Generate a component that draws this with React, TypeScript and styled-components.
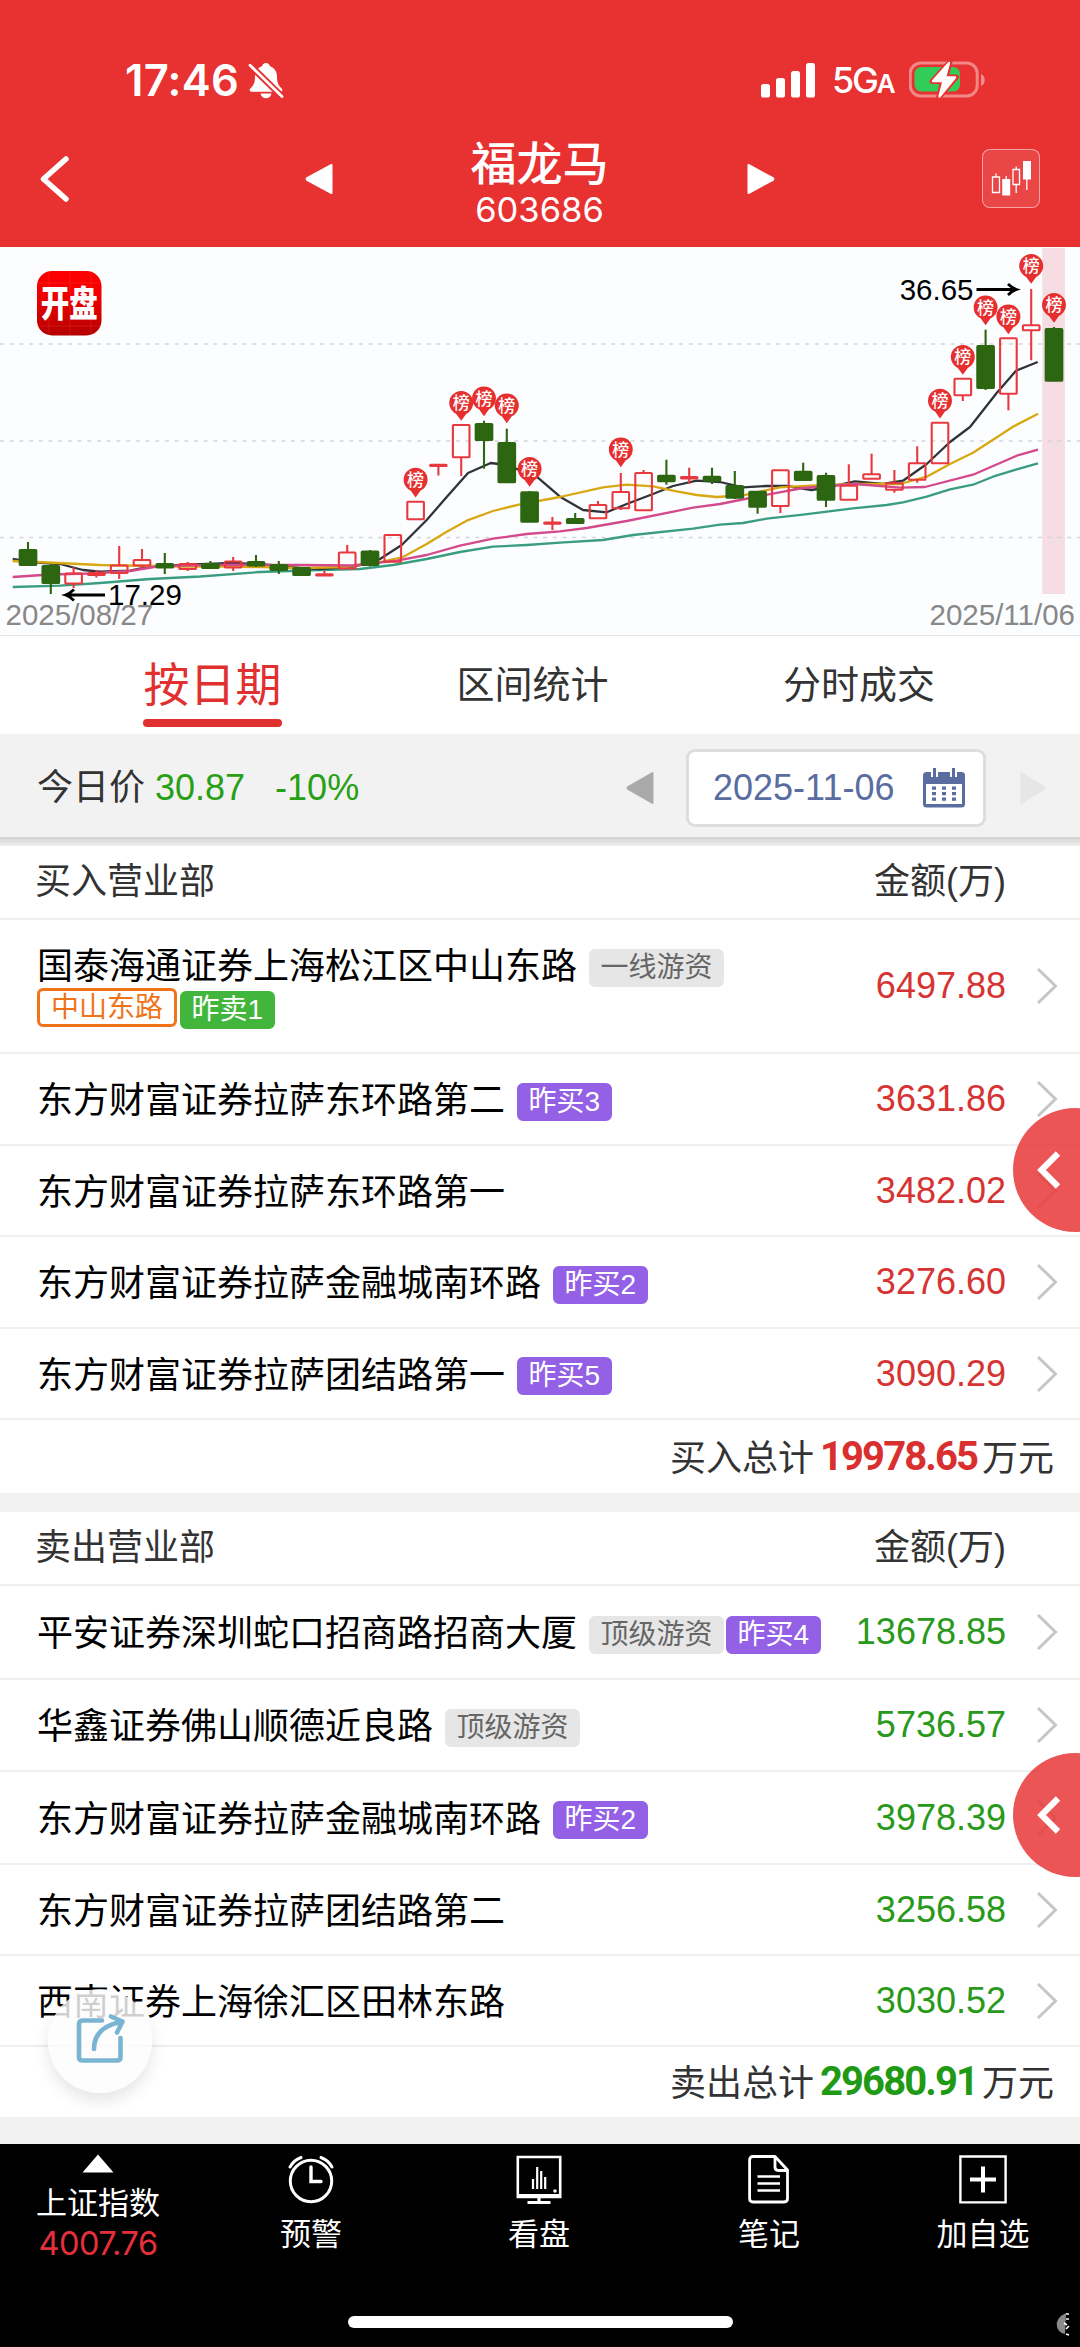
import React from "react";
import styled, { createGlobalStyle } from "styled-components";

const GlobalStyle = createGlobalStyle`
  * { box-sizing: border-box; }
  body { margin: 0; background: #000; }
`;

const sans = `"Liberation Sans", "Noto Sans CJK SC", sans-serif`;
const system = `Inter, "Noto Sans CJK SC", sans-serif`;

const Screen = styled.div`
  position: relative;
  width: 1080px;
  height: 2347px;
  display: flex;
  flex-direction: column;
  overflow: hidden;
  background: #fff;
  color: #333;
  font-family: ${sans};
  font-size: 36px;
  white-space: nowrap;
  svg { display: block; flex: none; }
`;

/* ---------- header ---------- */

const Header = styled.header`
  flex: none;
  height: 247px;
  background: #e83131;
  color: #fff;
`;

const StatusBar = styled.div`
  height: 118px;
  padding: 42px 94px 0 125px;
  display: flex;
  justify-content: space-between;
  align-items: center;
  font-family: ${system};
`;

const StatusGroup = styled.div<{ $gap: number }>`
  display: flex;
  align-items: center;
  gap: ${(p) => p.$gap}px;
`;

const Clock = styled.span`
  width: 114px;
  font-size: 43.5px;
  line-height: 48px;
  font-weight: 600;
  letter-spacing: 0.3px;
`;

const Network = styled.span`
  display: flex;
  align-items: baseline;
  width: 60px;
  font-size: 36px;
  line-height: 40px;
  font-weight: 500;
  letter-spacing: -2.2px;
  transform: translateY(2px);
  small { font-size: 26px; font-weight: 600; }
`;

const TitleBar = styled.div`
  height: 121px;
  padding: 0 40px 0 39px;
  display: flex;
  justify-content: space-between;
  align-items: center;
`;

const BackSlot = styled.div`
  width: 58px;
`;

const Switcher = styled.div`
  width: 470px;
  display: flex;
  justify-content: space-between;
  align-items: center;
`;

const StockTitle = styled.div`
  margin-top: 12px;
  display: flex;
  flex-direction: column;
  align-items: center;
  font-family: ${system};
`;

const StockName = styled.h1`
  margin: 0;
  font-size: 46px;
  line-height: 50px;
  font-weight: 500;
`;

const StockCode = styled.span`
  font-size: 34.5px;
  line-height: 43px;
`;

const ChartButton = styled.div`
  width: 58px;
  height: 59px;
  border: 1px solid rgba(255, 255, 255, 0.5);
  border-radius: 8px;
  background: rgba(255, 255, 255, 0.1);
`;

/* ---------- chart ---------- */

const ChartPanel = styled.section`
  flex: none;
  height: 389px;
  border-bottom: 1px solid #e3e6e8;
  background: #fcfdff;
`;

/* ---------- tabs and toolbar ---------- */

const Tabs = styled.nav`
  flex: none;
  height: 98px;
  padding: 0 145px 0 143px;
  display: flex;
  justify-content: space-between;
`;

const Tab = styled.div<{ $active?: boolean }>`
  display: flex;
  flex-direction: column;
  align-items: center;
  padding-top: 20px;
  font-size: ${(p) => (p.$active ? 46 : 38)}px;
  line-height: 58px;
  color: ${(p) => (p.$active ? "#e03030" : "#333")};
  &::after {
    content: "";
    display: ${(p) => (p.$active ? "block" : "none")};
    width: 139px;
    height: 8px;
    margin-top: 5px;
    border-radius: 4px;
    background: #e03030;
  }
`;

const Toolbar = styled.div`
  flex: none;
  height: 103px;
  padding: 5px 34px 0 37px;
  display: flex;
  align-items: center;
  background: #f2f2f2;
`;

const PriceInfo = styled.div`
  flex: 1;
  display: flex;
  align-items: center;
  line-height: 50px;
`;

const Green = styled.span<{ $left: number }>`
  margin-left: ${(p) => p.$left}px;
  color: #28a015;
`;

const DateBox = styled.div`
  width: 300px;
  height: 78px;
  margin: 0 34px 0 32px;
  padding: 0 18px 0 24px;
  display: flex;
  align-items: center;
  justify-content: space-between;
  border: 3px solid #ddd;
  border-radius: 9px;
  background: #fff;
  color: #5a6da0;
`;

const Shade = styled.div`
  flex: none;
  height: 9px;
  background: linear-gradient(#d2d2d2, #efefef);
`;

/* ---------- broker lists ---------- */

const ListHead = styled.div`
  flex: none;
  height: 74px;
  padding: 0 74px 8px 35px;
  display: flex;
  justify-content: space-between;
  align-items: center;
  border-bottom: 2px solid #efefef;
`;

const Row = styled.div<{ $height: number }>`
  flex: none;
  height: ${(p) => p.$height}px;
  padding: 0 22px 0 37px;
  display: flex;
  align-items: center;
  border-bottom: 2px solid #efefef;
`;

const Broker = styled.div`
  flex: 1;
  display: flex;
  flex-direction: column;
  color: #000;
`;

const Line = styled.div<{ $gap?: number }>`
  height: 42px;
  display: flex;
  align-items: center;
  gap: ${(p) => p.$gap ?? 2}px;
`;

const BrokerName = styled.span`
  margin: 4px 10px 0 0;
  line-height: 42px;
`;

type TagKind = "gray" | "buy" | "sell" | "alias";

const tagColors: Record<TagKind, [string, string, string]> = {
  gray: ["#e6e6e6", "#666", "#e6e6e6"],
  buy: ["#9360e6", "#fff", "#9360e6"],
  sell: ["#42b63c", "#fff", "#42b63c"],
  alias: ["#fff", "#f07318", "#f07318"],
};

const Tag = styled.span<{ $kind: TagKind }>`
  height: ${(p) => (p.$kind === "alias" ? 39 : 38)}px;
  margin-top: ${(p) => (p.$kind === "alias" ? 0 : 5)}px;
  padding: 0 ${(p) => (p.$kind === "alias" ? 11 : 9.5)}px;
  border: ${(p) => (p.$kind === "alias" ? 3 : 2)}px solid ${(p) => tagColors[p.$kind][2]};
  border-radius: 6px;
  background: ${(p) => tagColors[p.$kind][0]};
  color: ${(p) => tagColors[p.$kind][1]};
  font-size: 28px;
  line-height: 33px;
`;

const Amount = styled.span<{ $color: string }>`
  margin: 0 30px 0 0;
  color: ${(p) => p.$color};
`;

const Total = styled.div<{ $height: number }>`
  flex: none;
  height: ${(p) => p.$height}px;
  padding: 0 26px 4px 0;
  display: flex;
  justify-content: flex-end;
  align-items: center;
`;

const TotalValue = styled.b<{ $color: string }>`
  width: 168px;
  margin-top: 4px;
  padding-left: 6px;
  font-family: Roboto, sans-serif;
  font-size: 40px;
  letter-spacing: -1.9px;
  line-height: 48px;
  color: ${(p) => p.$color};
`;

const Divider = styled.div<{ $height: number }>`
  flex: none;
  height: ${(p) => p.$height}px;
  background: #f2f2f2;
`;

/* ---------- floating buttons ---------- */

const DrawerHandle = styled.div<{ $top: number }>`
  position: absolute;
  top: ${(p) => p.$top}px;
  left: 1013px;
  width: 124px;
  height: 124px;
  padding: 43px 0 0 24px;
  border-radius: 50%;
  background: rgba(232, 62, 62, 0.88);
`;

const ShareButton = styled.div`
  position: absolute;
  top: 1989px;
  left: 48px;
  width: 104px;
  height: 104px;
  padding: 24px 0 0 28px;
  border-radius: 50%;
  background: rgba(252, 252, 252, 0.82);
  box-shadow: 0 8px 16px rgba(0, 0, 0, 0.1);
`;

/* ---------- bottom bar ---------- */

const BottomBar = styled.footer`
  flex: none;
  position: relative;
  height: 204px;
  display: grid;
  grid-template-columns: 196px 230px 226px 234px 194px;
  background: #000;
  color: #fff;
`;

const BottomItem = styled.div`
  display: flex;
  flex-direction: column;
  align-items: center;
  padding-top: 10px;
  font-size: 31px;
  line-height: 40px;
  svg + span { margin-top: 11px; }
`;

const IndexValue = styled.span`
  font-family: ${system};
  font-size: 32.5px;
  letter-spacing: -0.5px;
  color: #e5303c;
`;

const HomeIndicator = styled.div`
  position: absolute;
  left: 348px;
  bottom: 20px;
  width: 385px;
  height: 12px;
  border-radius: 6px;
  background: #fff;
`;

const Corner = styled.div`
  position: absolute;
  right: 10px;
  bottom: 12px;
`;

/* ---------- chart data ---------- */

type Candle = [up: number, high: number, top: number, bottom: number, low: number];

const candles: Candle[] = [
  [0, 542, 550, 565, 565], [0, 564, 566, 583, 594], [1, 567, 573.5, 583.5, 588],
  [1, 570, 573, 575, 577.5], [1, 546, 565.5, 573, 579], [1, 549, 560, 565.5, 568],
  [0, 553, 564, 567.5, 574], [1, 562, 564, 569, 571], [0, 561, 564, 568, 568],
  [1, 557, 561.5, 567.5, 571], [0, 555, 562, 565.5, 567], [0, 561, 565, 570, 574],
  [0, 568, 568, 575, 575], [1, 571, 574.3, 575.5, 576], [1, 545, 552.5, 568.5, 568.5],
  [0, 550, 551.5, 565, 566.5], [1, 535, 535, 561.7, 561.7], [1, 501.7, 501.7, 519.3, 519.3],
  [1, 464, 464.8, 466, 475.5], [1, 425, 425, 457.3, 476], [0, 420.7, 424, 440, 468.7],
  [0, 428.7, 443, 482.3, 482.3], [0, 491, 492.3, 521.7, 521.7], [1, 517, 522.5, 523.7, 530],
  [0, 513, 519, 523, 523], [1, 501, 505, 518.3, 518.3], [1, 473, 492, 508.3, 510],
  [1, 470, 473, 510.3, 510.3], [0, 459.7, 475.7, 481.3, 484.7], [1, 467.7, 477, 478.4, 484],
  [0, 467.7, 476.7, 480.7, 484], [0, 471, 486, 497.7, 499], [0, 491.7, 491.7, 506.7, 513.7],
  [1, 470.3, 470.3, 506, 513], [0, 462.7, 471.7, 480, 480], [0, 472.7, 476, 499.7, 507],
  [1, 464.3, 485.7, 499.7, 499.7], [1, 453.7, 474.3, 478.7, 478.7], [1, 470, 483.3, 489.7, 492.7],
  [1, 446.3, 463.3, 479.7, 482.7], [1, 422.7, 422.7, 463.3, 463.3], [1, 378.7, 378.7, 395.3, 401],
  [0, 329.7, 346, 388, 390], [1, 338.3, 338.3, 393.7, 410.3], [1, 289, 325.3, 330.3, 360.3],
  [0, 327, 329, 380.7, 380.7],
];

const pins: [index: number, y: number][] = [
  [17, 480], [19, 403.3], [20, 398.7], [21, 405.7], [22, 469.3], [26, 449.7],
  [40, 401], [41, 357.3], [42, 307.7], [43, 316.7], [44, 266.3], [45, 305.3],
];

const averages: [color: string, points: string][] = [
  ["#3a9d80", "12.7,587 60,585.7 100,583 150,579 200,576.5 260,572 320,570 360,569 393,565 426.7,559 460,552 493,546.7 526.7,545 560,542.7 603,540 633,535 693,528.7 720,524.7 743,523 766.7,518.7 803,514.7 853,508.3 886.7,505 903,502.3 926.7,496.7 950,489.3 973,484.7 993,476.7 1016.7,469.3 1038,463.3"],
  ["#303338", "12.7,559 37,562.7 60,564 83,570 100,571.7 130,570.7 147,567 187,564.7 233,563 267,564.7 300,568 320,569 353,566.7 370,563 380,559 401.7,545 426.7,520 446.7,497 468,473 490.7,463 506.7,465 536.7,476.7 560,496.7 583,510 606.7,512.3 626.7,504 653,494 673,486 696.7,480.7 720,482 743,487.3 766.7,486 786.7,486 811.7,490 833,486 855,481.3 883,484 903,480.7 926.7,464 950,442 970,427 996.7,393 1016,370.7 1037.7,362"],
  ["#d8a812", "12.7,561 37,562 100,565 180,566.5 233,566.5 300,568 345,567 380,562 403,557 426.7,544 446.7,531.7 466.7,520.7 493,511 520,504.3 560,497 603,487.3 626.7,484.7 653,486.3 676.7,491.3 696.7,495 716.7,497 743,495.3 780,487.3 810,485.7 855,484 900,484 926.7,476.7 950,464 973,452.7 1013,426.7 1038,413.7"],
  ["#d3498c", "12.7,577 50,574.5 90,573.5 130,571 160,566 233,564.7 300,565 353,565.5 380,562.5 396.7,560.7 426.7,555 460,545.7 493,538.7 526.7,534 560,531.3 586.7,528 626.7,521 693,507.7 720,504 760,496 803,488 830,486 855,484 900,487.7 925,487 973,474.7 1016.7,455.7 1038,449.7"],
];

const RED = "#e8393f";
const GREEN = "#2c6611";
const xAt = (i: number) => 28 + 22.8 * i;

function CandleChart() {
  return (
    <svg width="1080" height="388" viewBox="0 247 1080 388">
      <defs>
        <linearGradient id="logo" x1="0" y1="0" x2="0" y2="1">
          <stop offset="0" stopColor="#ff0000" />
          <stop offset="0.35" stopColor="#f20000" />
          <stop offset="1" stopColor="#b40000" />
        </linearGradient>
      </defs>
      <rect x="1042.3" y="248" width="22.7" height="346" fill="#f6dde3" />
      {[344, 441, 537.5].map((y) => (
        <line key={y} x1="0" x2="1080" y1={y} y2={y} stroke="#d4d5dc" strokeWidth="1.4" strokeDasharray="4 5.7" />
      ))}
      <g fontFamily="Liberation Sans, sans-serif" fontSize="29.5" fill="#888">
        <text x="5.5" y="624.5">2025/08/27</text>
        <text x="1075" y="624.5" textAnchor="end">2025/11/06</text>
      </g>
      {averages.map(([color, points]) => (
        <polyline key={color} points={points} fill="none" stroke={color} strokeWidth="2.3" strokeLinejoin="round" />
      ))}
      {candles.map(([up, high, top, bottom, low], i) => {
        const x = xAt(i);
        const color = up ? RED : GREEN;
        return (
          <g key={i} stroke={color} strokeWidth="2.1">
            {high < top && <line x1={x} x2={x} y1={high} y2={top} />}
            {low > bottom && <line x1={x} x2={x} y1={bottom} y2={low} />}
            <rect
              x={x - 8.3}
              y={top}
              width="16.6"
              height={bottom - top}
              rx="0.8"
              fill={up ? "none" : GREEN}
            />
          </g>
        );
      })}
      {pins.map(([i, y]) => (
        <g key={i} transform={`translate(${xAt(i)} ${y})`}>
          <path d="M0 17.5 L-5 10.6 A12 12 0 1 1 5 10.6 Z" fill="#e6302f" />
          <text y="6" textAnchor="middle" fontFamily="Noto Sans CJK SC, sans-serif" fontSize="17" fontWeight="500" fill="#fff">
            榜
          </text>
        </g>
      ))}
      <g fontFamily="Liberation Sans, sans-serif" fontSize="29.5" fill="#000">
        <text x="108" y="604.5">17.29</text>
        <text x="973.5" y="300" textAnchor="end">36.65</text>
      </g>
      <g fill="none" stroke="#000" strokeWidth="2.8">
        <path d="M105 595H67M74 589.5Q70 593.5 65.500 595Q70 596.500 74 600.500" />
        <path d="M976.500 289.500H1015M1008 284Q1012 288 1016.500 289.500Q1012 291 1008 295" />
      </g>
      <rect x="37" y="271" width="64.500" height="64.500" rx="15" fill="url(#logo)" />
      <path d="M37 283H101M37 326H101M49 271V335M91 271V335M70 271V335" stroke="#ff5a4a" strokeOpacity="0.3" strokeWidth="0.8" />
      <text
        transform="translate(69.300 317.200) scale(1 1.260)"
        textAnchor="middle"
        fontFamily="Noto Sans CJK SC, sans-serif"
        fontSize="28.500"
        fontWeight="900"
        fill="#fff"
      >
        开盘
      </text>
    </svg>
  );
}

/* ---------- small icons ---------- */

const BellOff = () => (
  <svg width="36" height="37" viewBox="0 0 36 37">
    <path d="M18 1c2.200 0 3.600 1.300 4 3.200 4.600 1.500 7 5.500 7 10.300 0 7 2 9.500 4.700 12 1.300 1.400.6 3.300-1.400 3.300H3.700c-2 0-2.700-1.900-1.400-3.300C5 24 7 21.500 7 14.500c0-4.800 2.400-8.800 7-10.300C14.400 2.300 15.800 1 18 1Z" fill="#fff" />
    <path d="M12.500 31.500h11c-.5 3-2.700 4.800-5.500 4.800s-5-1.800-5.500-4.800Z" fill="#fff" />
    <path d="M2 3.200 35 35.500" stroke="#e83131" strokeWidth="6.500" />
    <path d="M2 3.200 34 34.500" stroke="#fff" strokeWidth="2.800" strokeLinecap="round" />
  </svg>
);

const Signal = () => (
  <svg width="54" height="35" viewBox="0 0 54 35" fill="#fff">
    <rect x="0" y="21" width="9" height="13.500" rx="2.600" />
    <rect x="15" y="15" width="9" height="19.500" rx="2.600" />
    <rect x="30" y="8" width="9" height="26.500" rx="2.600" />
    <rect x="45" y="0" width="9" height="34.500" rx="2.600" />
  </svg>
);

const Battery = () => (
  <svg width="77" height="38" viewBox="0 0 77 38">
    <rect x="1.200" y="2" width="67" height="33" rx="10.500" fill="none" stroke="#fff" strokeOpacity="0.420" strokeWidth="3" />
    <path d="M72 13c5 1.500 5 10.500 0 12Z" fill="#fff" fillOpacity="0.450" />
    <rect x="5.500" y="6" width="45.500" height="24.500" rx="6.500" fill="#32cd58" />
    <path d="M41 .8 23 20.500h10.500L29.500 37 47.500 16H37Z" fill="#fff" stroke="#e83131" strokeWidth="5" strokeLinejoin="round" />
    <path d="M40 2 24 20h10.500L30.500 35.500 46 16.500H36Z" fill="#fff" stroke="#fff" strokeWidth="2.400" strokeLinejoin="round" />
  </svg>
);

const Triangle = ({ color, flip, h = 32, w = 28 }: { color: string; flip?: boolean; h?: number; w?: number }) => (
  <svg width={w} height={h} viewBox="0 0 28 32" preserveAspectRatio="none">
    <path
      d="M26.500 2V30L2 16.800Q1.200 16 2 15.200Z"
      fill={color}
      stroke={color}
      strokeWidth="2"
      strokeLinejoin="round"
      transform={flip ? "matrix(-1 0 0 1 28 0)" : undefined}
    />
  </svg>
);

const Chevron = () => (
  <svg width="22" height="38" viewBox="0 0 22 38">
    <path d="M2 2 19.500 19 2 36" fill="none" stroke="#c6c6c6" strokeWidth="3" />
  </svg>
);

const HandleArrow = () => (
  <svg width="24" height="38" viewBox="0 0 24 38">
    <path d="M21 2.500 4.500 19 21 35.500" fill="none" stroke="#fff" strokeWidth="6.200" />
  </svg>
);

const Calendar = () => (
  <svg width="42" height="40" viewBox="0 0 42 40">
    <rect x="0" y="4" width="42" height="35.500" rx="3.500" fill="#5a6da0" />
    <rect x="3" y="16" width="36" height="20" fill="#fff" />
    <path d="M11.500 0V9M30.500 0V9" stroke="#fff" strokeWidth="7" />
    <path d="M11.500 0V9M30.500 0V9" stroke="#5a6da0" strokeWidth="3" />
    {[18.500, 24, 29.500].map((y) => (
      <path key={y} d={`M9 ${y + 1.600}H33`} stroke="#5a6da0" strokeWidth="3.200" strokeDasharray="4 6" />
    ))}
  </svg>
);

/* ---------- content ---------- */

type Entry = {
  name: string;
  amount: string;
  height: number;
  tags?: [TagKind, string][];
  more?: [TagKind, string][];
};

const buyers: Entry[] = [
  { name: "国泰海通证券上海松江区中山东路", amount: "6497.88", height: 134, tags: [["gray", "一线游资"]], more: [["alias", "中山东路"], ["sell", "昨卖1"]] },
  { name: "东方财富证券拉萨东环路第二", amount: "3631.86", height: 92, tags: [["buy", "昨买3"]] },
  { name: "东方财富证券拉萨东环路第一", amount: "3482.02", height: 91 },
  { name: "东方财富证券拉萨金融城南环路", amount: "3276.60", height: 92, tags: [["buy", "昨买2"]] },
  { name: "东方财富证券拉萨团结路第一", amount: "3090.29", height: 91, tags: [["buy", "昨买5"]] },
];

const sellers: Entry[] = [
  { name: "平安证券深圳蛇口招商路招商大厦", amount: "13678.85", height: 94, tags: [["gray", "顶级游资"], ["buy", "昨买4"]] },
  { name: "华鑫证券佛山顺德近良路", amount: "5736.57", height: 92, tags: [["gray", "顶级游资"]] },
  { name: "东方财富证券拉萨金融城南环路", amount: "3978.39", height: 93, tags: [["buy", "昨买2"]] },
  { name: "东方财富证券拉萨团结路第二", amount: "3256.58", height: 91 },
  { name: "西南证券上海徐汇区田林东路", amount: "3030.52", height: 91 },
];

function BrokerList({ title, entries, color }: { title: string; entries: Entry[]; color: string }) {
  return (
    <>
      <ListHead>
        <span>{title}</span>
        <span>金额(万)</span>
      </ListHead>
      {entries.map((e) => (
        <Row key={e.name} $height={e.height}>
          <Broker>
            <Line>
              <BrokerName>{e.name}</BrokerName>
              {e.tags?.map(([kind, text]) => <Tag key={text} $kind={kind}>{text}</Tag>)}
            </Line>
            {e.more && (
              <Line $gap={3}>
                {e.more.map(([kind, text]) => <Tag key={text} $kind={kind}>{text}</Tag>)}
              </Line>
            )}
          </Broker>
          <Amount $color={color}>{e.amount}</Amount>
          <Chevron />
        </Row>
      ))}
    </>
  );
}

export default function App() {
  return (
    <Screen>
      <GlobalStyle />
      <Header>
        <StatusBar>
          <StatusGroup $gap={9}>
            <Clock>17:46</Clock>
            <BellOff />
          </StatusGroup>
          <StatusGroup $gap={17}>
            <Signal />
            <Network>5G<small>A</small></Network>
            <Battery />
          </StatusGroup>
        </StatusBar>
        <TitleBar>
          <BackSlot>
            <svg width="32" height="48" viewBox="0 0 32 48">
              <path d="M27 4 4.500 24 27 44" fill="none" stroke="#fff" strokeWidth="5.500" strokeLinecap="round" strokeLinejoin="round" />
            </svg>
          </BackSlot>
          <Switcher>
            <Triangle color="#fff" />
            <StockTitle>
              <StockName>福龙马</StockName>
              <StockCode>603686</StockCode>
            </StockTitle>
            <Triangle color="#fff" flip />
          </Switcher>
          <ChartButton>
            <svg width="56" height="57" viewBox="0 0 56 57" fill="none" stroke="#fff" strokeWidth="1.300">
              <path d="M9.500 27h7v15.500h-7ZM13 23.500V27M30 19.500h6.500v15H30ZM33.200 16.500V19.500M33.200 34.500V43M23.200 26V29M43.800 29V40" />
              <path d="M19.200 29h8v16.500h-8ZM40 11h8v18.500h-8Z" fill="#fff" stroke="none" />
            </svg>
          </ChartButton>
        </TitleBar>
      </Header>

      <ChartPanel>
        <CandleChart />
      </ChartPanel>

      <Tabs>
        <Tab $active>按日期</Tab>
        <Tab>区间统计</Tab>
        <Tab>分时成交</Tab>
      </Tabs>

      <Toolbar>
        <PriceInfo>
          <span>今日价</span>
          <Green $left={10}>30.87</Green>
          <Green $left={30}>-10%</Green>
        </PriceInfo>
        <Triangle color="#aaa" h={34} />
        <DateBox>
          <span>2025-11-06</span>
          <Calendar />
        </DateBox>
        <Triangle color="#e6e6e6" h={34} w={26} flip />
      </Toolbar>
      <Shade />

      <BrokerList title="买入营业部" entries={buyers} color="#d63333" />
      <Total $height={73}>
        买入总计<TotalValue $color="#d92f2f">19978.65</TotalValue>万元
      </Total>
      <Divider $height={19} />
      <BrokerList title="卖出营业部" entries={sellers} color="#28991a" />
      <Total $height={70}>
        卖出总计<TotalValue $color="#209a14">29680.91</TotalValue>万元
      </Total>
      <Divider $height={27} />

      <BottomBar>
        <BottomItem>
          <svg width="32" height="19" viewBox="0 0 32 19">
            <path d="M16 .5 31.500 18.500H.5Z" fill="#fff" />
          </svg>
          <span>上证指数</span>
          <IndexValue>4007.76</IndexValue>
        </BottomItem>
        <BottomItem>
          <svg width="48" height="50" viewBox="0 0 48 50" fill="none" stroke="#fff" strokeWidth="3" strokeLinecap="round">
            <circle cx="24" cy="27" r="20.700" />
            <path d="M24 13V27.500H34" strokeWidth="3.400" />
            <path d="M3 13Q7 6 14 3.500M45 13Q41 6 34 3.500" />
          </svg>
          <span>预警</span>
        </BottomItem>
        <BottomItem>
          <svg width="48" height="50" viewBox="0 0 48 50" fill="none" stroke="#fff" strokeWidth="2.600">
            <path d="M2.800 3H45.200V43H2.800Z" />
            <path d="M2 41.500H46M24 43V47M12.500 48.500H35.500" strokeWidth="3.200" />
            <path d="M18 25V35M22.200 13V35M26.200 17V35M30.200 23V35" strokeWidth="2.200" />
            <circle cx="40" cy="37" r="1.800" fill="#fff" stroke="none" />
          </svg>
          <span>看盘</span>
        </BottomItem>
        <BottomItem>
          <svg width="42" height="50" viewBox="0 0 42 50" fill="none" stroke="#fff" strokeWidth="2.800" strokeLinejoin="round">
            <path d="M5 2.500H27L39.500 16V44.500Q39.500 48 36 48H5Q1.600 48 1.600 44.500V6Q1.600 2.500 5 2.500Z" />
            <path d="M27 2.500V13Q27 16.500 30.500 16.500H39.500" />
            <path d="M9.500 22.500H32M9.500 29.500H32M9.500 36.500H32" strokeWidth="2.500" />
          </svg>
          <span>笔记</span>
        </BottomItem>
        <BottomItem>
          <svg width="48" height="50" viewBox="0 0 48 50" fill="none" stroke="#fff" strokeWidth="2.400">
            <path d="M1.400 2.500H46.600V48.400H1.400Z" />
            <path d="M24 12.500V38.500M11 25.500H37" strokeWidth="4" />
          </svg>
          <span>加自选</span>
        </BottomItem>
        <HomeIndicator />
        <Corner>
          <svg width="16" height="24" viewBox="0 0 16 24">
            <path d="M12 1Q1 6 3 15Q5 21 11 22Z" fill="#8a8a8a" />
            <path d="M12 2h3M12 7h3M10 11l3 2M12 17l3-3M12 22l3 1" stroke="#fff" strokeWidth="1.600" />
          </svg>
        </Corner>
      </BottomBar>

      <DrawerHandle $top={1108}><HandleArrow /></DrawerHandle>
      <DrawerHandle $top={1753}><HandleArrow /></DrawerHandle>
      <ShareButton>
        <svg width="50" height="52" viewBox="0 0 50 52" fill="none" stroke="#7ab4d3" strokeWidth="4.600" strokeLinecap="round" strokeLinejoin="round">
          <path d="M26 7.500H6.500Q3 7.500 3 11V44Q3 47.500 6.500 47.500H41Q44.500 47.500 44.500 44V25" />
          <path d="M18 36Q18 14 45 9M35 3.500 46.500 8.500 41 19.500" />
        </svg>
      </ShareButton>
    </Screen>
  );
}
